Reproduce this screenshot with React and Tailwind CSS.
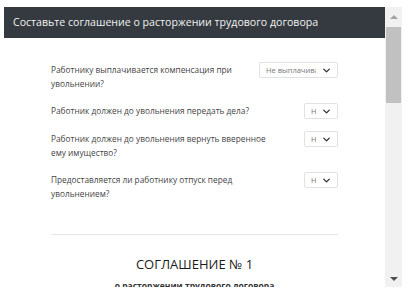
import { ChevronDown } from 'lucide-react';

const questions = [
  { text: 'Работнику выплачивается компенсация при увольнении?', value: 'Не выплачивается', wide: true },
  { text: 'Работник должен до увольнения передать дела?', value: 'Нет' },
  { text: 'Работник должен до увольнения вернуть вверенное ему имущество?', value: 'Нет' },
  { text: 'Предоставляется ли работнику отпуск перед увольнением?', value: 'Нет' },
];

function Select({ value, wide }) {
  return (
    <div className={`${wide ? 'w-[79px]' : 'w-[34px]'} h-[16px] shrink-0 flex items-center border border-[#e2e2e2] rounded-[2px] bg-white pl-[6px]`}>
      <span className="flex-1 overflow-hidden whitespace-nowrap text-[7.5px] leading-[14px] text-[#777]">{value}</span>
      <ChevronDown className="w-[11px] h-[11px] mx-[5px] shrink-0 text-[#333]" strokeWidth={3} />
    </div>
  );
}

export default function App() {
  return (
    <div className="w-[408px] h-[292px] bg-white pt-[7px] pl-[4px] overflow-hidden" style={{ fontFamily: '"Open Sans", "Noto Sans", sans-serif' }}>
      <div className="flex h-[280px]">
        <div className="w-[381px] flex flex-col overflow-hidden">
          <div className="h-[31px] shrink-0 bg-[#343a40] flex items-center pl-[9px] text-[#f2f2f2] text-[10.6px]">
            Составьте соглашение о расторжении трудового договора
          </div>
          <div className="px-[47px] pt-[24px]">
            <div className="flex flex-col gap-3">
              {questions.map((q) => (
                <div key={q.text} className="flex items-start justify-between gap-2">
                  <p className="pt-px w-[225px] text-[8.3px] leading-[14px] text-[#444]">{q.text}</p>
                  <Select value={q.value} wide={q.wide} />
                </div>
              ))}
            </div>
            <div className="h-px bg-[#e6e6e6] mt-[33px]" />
            <h2 className="mt-[19px] text-center text-[13px] leading-[20px] font-medium text-[#1a1a1a]">СОГЛАШЕНИЕ № 1</h2>
            <p className="mt-[6px] text-center text-[8.5px] leading-[12px] font-bold text-[#333]">о расторжении трудового договора</p>
          </div>
        </div>
        <div className="w-[17px] bg-[#f1f1f1] flex flex-col items-center">
          <div className="h-[20px] flex items-center justify-center">
            <div className="w-0 h-0 border-l-[4px] border-r-[4px] border-b-[4px] border-l-transparent border-r-transparent border-b-[#a3a3a3]" />
          </div>
          <div className="w-[15px] h-[76px] bg-[#c1c1c1]" />
          <div className="flex-1" />
          <div className="h-[17px] flex items-center justify-center">
            <div className="w-0 h-0 border-l-[4px] border-r-[4px] border-t-[4px] border-l-transparent border-r-transparent border-t-[#505050]" />
          </div>
        </div>
      </div>
    </div>
  );
}
